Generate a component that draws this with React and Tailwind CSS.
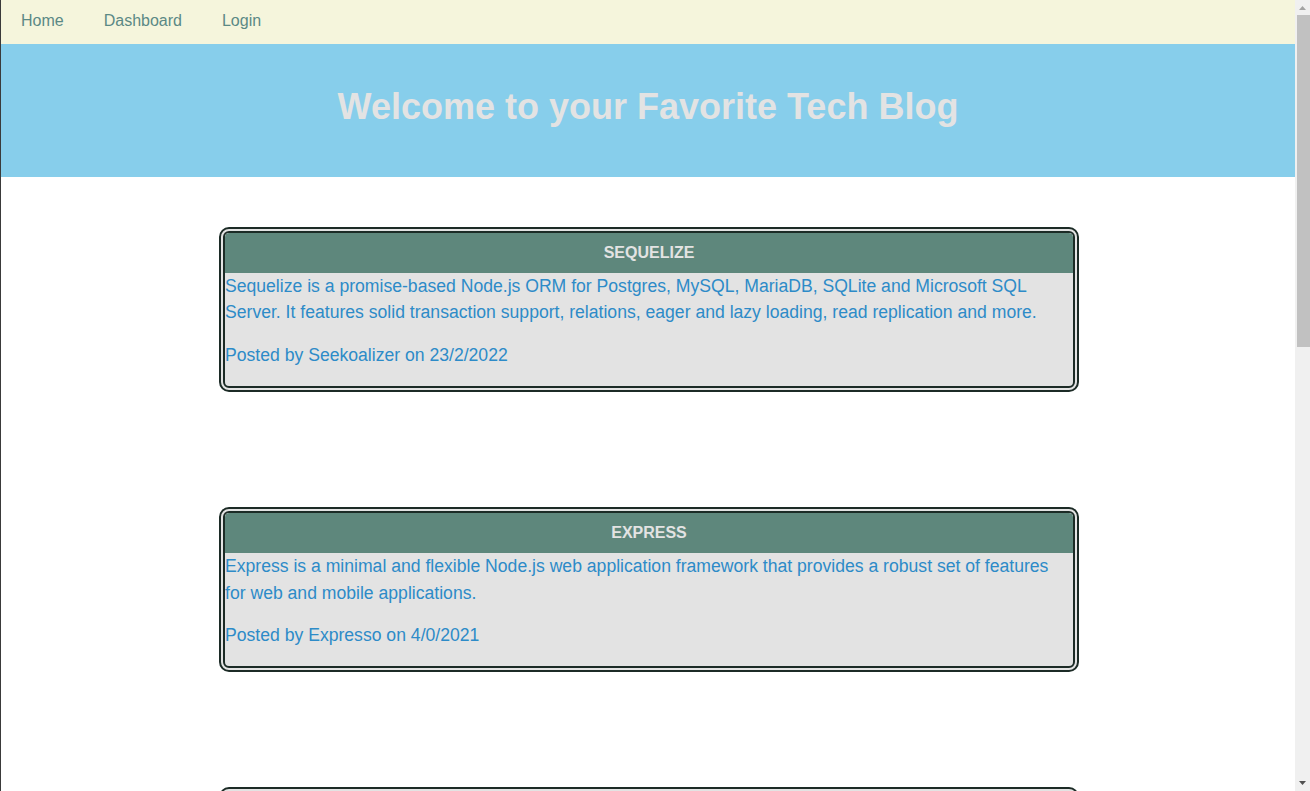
import React from "react";

const posts = [
  {
    id: 1,
    title: "SEQUELIZE",
    body: "Sequelize is a promise-based Node.js ORM for Postgres, MySQL, MariaDB, SQLite and Microsoft SQL Server. It features solid transaction support, relations, eager and lazy loading, read replication and more.",
    author: "Seekoalizer",
    date: "23/2/2022",
  },
  {
    id: 2,
    title: "EXPRESS",
    body: "Express is a minimal and flexible Node.js web application framework that provides a robust set of features for web and mobile applications.",
    author: "Expresso",
    date: "4/0/2021",
  },
  {
    id: 3,
    title: "HANDLEBARS",
    body: "Handlebars provides the power necessary to let you build semantic templates effectively with no frustration.",
    author: "Mustachio",
    date: "12/1/2022",
  },
];

const PostCard = ({ post }) => (
  <div className="w-[860px] mx-auto rounded-[10px] border-[6px] border-double border-[#1c2b26] bg-[#e3e3e3] overflow-hidden">
    <h3 className="h-10 flex items-center justify-center bg-[#5e877c] text-[16px] font-bold text-[#e3e3e3] rounded-t-[4px]">
      {post.title}
    </h3>
    <div className="text-[17.6px] leading-[26.4px] text-[#2d8bc8]">
      <p className="mb-4">{post.body}</p>
      <p className="mb-[18px]">
        Posted by {post.author} on {post.date}
      </p>
    </div>
  </div>
);

// window scrollbar, drawn over the right edge
const Scrollbar = () => (
  <div className="fixed top-0 right-0 h-screen w-[15px] bg-[#f0f0f0] flex flex-col">
    <div className="h-[15px] flex items-center justify-center">
      <svg width="9" height="6" viewBox="0 0 9 6">
        <path d="M4.5 1 L8 5 L1 5 Z" fill="#a3a3a3" />
      </svg>
    </div>
    <div className="h-[332px] ml-[2px] bg-[#c1c1c1]" />
    <div className="flex-1" />
    <div className="h-[17px] flex items-center justify-center">
      <svg width="9" height="6" viewBox="0 0 9 6">
        <path d="M1 1 L8 1 L4.5 5 Z" fill="#505050" />
      </svg>
    </div>
  </div>
);

export default function App() {
  return (
    <div className="min-h-screen bg-white border-l border-[#3a3a3a] mr-[15px] font-['Liberation_Sans',Arial,sans-serif]">
      <nav className="h-11 pb-0.5 bg-[#f5f5dc] flex items-center">
        {["Home", "Dashboard", "Login"].map((link) => (
          <a key={link} href="#" className="px-5 text-[16px] text-[#5b8985]">
            {link}
          </a>
        ))}
      </nav>

      <header className="h-[133px] pb-2 bg-[#87ceeb] flex items-center justify-center">
        <h1 className="text-[36px] font-bold text-[#e3e3e3]">
          Welcome to your Favorite Tech Blog
        </h1>
      </header>

      <main className="flex flex-col gap-[115px] pt-[50px] pb-[60px] pl-[2px]">
        {posts.map((post) => (
          <PostCard key={post.id} post={post} />
        ))}
      </main>

      <Scrollbar />
    </div>
  );
}
